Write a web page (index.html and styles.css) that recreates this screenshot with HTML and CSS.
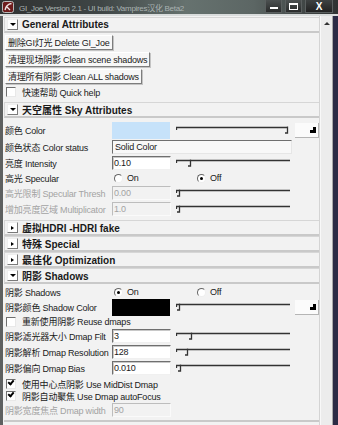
FILE: index.html
```html
<!DOCTYPE html>
<html lang="zh-CN">

<head>
    <meta charset="UTF-8">
    <title>GI_Joe Version 2.1</title>
    <link rel="stylesheet" href="styles.css">
</head>

<body>
    <div class="window">
        <div class="titlebar">
            <svg class="app-icon" width="12" height="12" viewBox="0 0 12 12">
                <rect x="0.5" y="0.5" width="11" height="11" rx="2" fill="#6e1c1c" stroke="#b9b9b9" />
                <path d="M3 9 C4 5 6 3 9.5 2.5 M4 5 L8 9" fill="none" stroke="#f0e6e6" stroke-width="1.3" />
            </svg>
            <span class="title">GI_Joe Version 2.1 - UI build: Vampires汉化 Beta2</span>
            <div class="caption">
                <span class="cap cap-min"><i></i></span>
                <span class="cap cap-max"><i></i></span>
                <span class="cap cap-close">X</span>
            </div>
        </div>

        <div class="client">
            <div class="panel">

                <!-- General -->
                <div class="frame">
                    <div class="frame-head"><span class="toggle open"></span>General Attributes</div>
                    <div class="frame-body general">
                        <button class="btn">删除GI灯光 Delete GI_Joe</button>
                        <button class="btn">清理现场阴影 Clean scene shadows</button>
                        <button class="btn">清理所有阴影 Clean ALL shadows</button>
                        <div class="check-row"><span class="checkbox"></span>快速帮助 Quick help</div>
                    </div>
                </div>

                <!-- Sky -->
                <div class="frame">
                    <div class="frame-head"><span class="toggle open"></span>天空属性 Sky Attributes</div>
                    <div class="frame-body sky">
                        <div class="row tall">
                            <span class="label">颜色 Color</span>
                            <span class="swatch sky"></span>
                            <svg class="slider" width="116" height="10" viewBox="0 0 116 10">
                                <path d="M0.5 5 V2.5 H111.5 M111.5 1.5 V8 H109" />
                            </svg>
                            <span class="map-btn"><span class="map-icon"></span></span>
                        </div>
                        <div class="row">
                            <span class="label">颜色状态 Color status</span>
                            <span class="dropdown">Solid Color</span>
                        </div>
                        <div class="row">
                            <span class="label">亮度 Intensity</span>
                            <span class="field">0.10</span>
                            <svg class="slider" width="116" height="10" viewBox="0 0 116 10">
                                <path d="M0.5 5 V2.5 H114 M14.5 1.5 V8 H12" />
                            </svg>
                        </div>
                        <div class="row radio-row">
                            <span class="label">高光 Specular</span>
                            <span class="radio"></span><span class="radio-text">On</span>
                            <span class="radio on second"></span><span class="radio-text">Off</span>
                        </div>
                        <div class="row dim">
                            <span class="label">高光限制 Specular Thresh</span>
                            <span class="field">0.00</span>
                            <svg class="slider" width="116" height="10" viewBox="0 0 116 10">
                                <path d="M0.5 5 V2.5 H114 M3.5 1.5 V8 H1" />
                            </svg>
                        </div>
                        <div class="row dim">
                            <span class="label">增加亮度区域 Multiplicator</span>
                            <span class="field">1.0</span>
                            <svg class="slider" width="116" height="10" viewBox="0 0 116 10">
                                <path d="M0.5 5 V2.5 H114 M3.5 1.5 V8 H1" />
                            </svg>
                        </div>
                    </div>
                </div>

                <div class="frame">
                    <div class="frame-head"><span class="toggle"></span>虚拟HDRI -HDRI fake</div>
                </div>
                <div class="frame">
                    <div class="frame-head"><span class="toggle"></span>特殊 Special</div>
                </div>
                <div class="frame">
                    <div class="frame-head"><span class="toggle"></span>最佳化 Optimization</div>
                </div>

                <!-- Shadows -->
                <div class="frame last">
                    <div class="frame-head"><span class="toggle open"></span>阴影 Shadows</div>
                    <div class="frame-body shadows">
                        <div class="row radio-row">
                            <span class="label">阴影 Shadows</span>
                            <span class="radio on"></span><span class="radio-text">On</span>
                            <span class="radio second"></span><span class="radio-text">Off</span>
                        </div>
                        <div class="row">
                            <span class="label">阴影颜色 Shadow Color</span>
                            <span class="swatch black"></span>
                            <svg class="slider" width="116" height="10" viewBox="0 0 116 10">
                                <path d="M0.5 5 V2.5 H114 M3.5 1.5 V8 H1" />
                            </svg>
                            <span class="map-btn"><span class="map-icon"></span></span>
                        </div>
                        <div class="check-row reuse"><span class="checkbox"></span>重新使用阴影 Reuse dmaps</div>
                        <div class="row">
                            <span class="label">阴影滤光器大小 Dmap Filt</span>
                            <span class="field">3</span>
                            <svg class="slider" width="116" height="10" viewBox="0 0 116 10">
                                <path d="M0.5 5 V2.5 H114 M15.5 1.5 V8 H13" />
                            </svg>
                        </div>
                        <div class="row">
                            <span class="label">阴影解析 Dmap Resolution</span>
                            <span class="field">128</span>
                            <svg class="slider" width="116" height="10" viewBox="0 0 116 10">
                                <path d="M0.5 5 V2.5 H114 M11.5 1.5 V8 H9" />
                            </svg>
                        </div>
                        <div class="row">
                            <span class="label">阴影偏向 Dmap Bias</span>
                            <span class="field">0.010</span>
                            <svg class="slider" width="116" height="10" viewBox="0 0 116 10">
                                <path d="M0.5 5 V2.5 H114 M4.5 1.5 V8 H2" />
                            </svg>
                        </div>
                        <div class="check-row middist"><span class="checkbox checked"></span>使用中心点阴影 Use MidDist Dmap</div>
                        <div class="check-row"><span class="checkbox checked"></span>阴影自动聚焦 Use Dmap autoFocus</div>
                        <div class="row dim">
                            <span class="label">阴影宽度焦点 Dmap width</span>
                            <span class="field">90</span>
                        </div>
                    </div>
                </div>

            </div>
            <div class="scrollbar"><span class="arrow-up"></span></div>
        </div>
    </div>
</body>

</html>
```

FILE: styles.css
```css
body {
    margin: 0;
    padding: 0;
    background-color: #2b2b3f;
    font-family: "Liberation Sans", "Noto Sans CJK SC", sans-serif;
    font-size: 9px;
    letter-spacing: -0.2px;
    color: #1a1a1a;
}

.window {
    width: 338px;
    height: 425px;
    overflow: hidden;
    display: flex;
    flex-direction: column;
}

/* title bar */
.titlebar {
    height: 14px;
    flex: none;
    display: flex;
    align-items: center;
    padding-left: 2px;
    background: linear-gradient(90deg, #2f3131 0%, #3f4646 30%, #66726f 55%, #5c6664 75%, #2f3232 100%);
    border-bottom: 2px solid #d9dcdc;
}

.app-icon {
    flex: none;
    margin-right: 5px;
}

.title {
    flex: 1;
    color: #aab3b2;
    white-space: nowrap;
    overflow: hidden;
    font-size: 8px;
    letter-spacing: -0.3px;
}

.caption {
    display: flex;
    align-self: stretch;
    gap: 3px;
    padding-right: 5px;
}

.cap {
    display: flex;
    align-items: center;
    justify-content: center;
    height: 12px;
    border: 1px solid #5a5f5f;
    border-top: none;
    background: linear-gradient(#4c5151, #2a2c2c);
}

.cap-min {
    width: 15px;
}

.cap-min i {
    display: block;
    width: 8px;
    height: 2px;
    margin-top: 4px;
    background-color: #fff;
}

.cap-max {
    width: 15px;
}

.cap-max i {
    display: block;
    width: 7px;
    height: 4px;
    border: 1px solid #fff;
    border-top-width: 2px;
}

.cap-close {
    width: 26px;
    color: #fff;
    font-weight: bold;
    font-size: 10px;
    letter-spacing: 0;
    background: linear-gradient(#3e4242, #222);
}

/* client area */
.client {
    flex: 1;
    display: flex;
    border-left: 3px solid #5e6060;
    border-right: 5px solid #2b2b45;
    background-color: #f2f2f2;
}

.panel {
    flex: 1;
    padding: 1px 0 0 1px;
    border-right: 1px solid #d4d4d4;
    overflow: hidden;
}

.scrollbar {
    width: 11px;
    flex: none;
    background-color: #ececec;
    border-left: 1px solid #f8f8f8;
    border-right: 1px solid #a8a8a8;
    display: flex;
    justify-content: center;
}

.arrow-up {
    margin-top: 6px;
    width: 0;
    height: 0;
    border-left: 3px solid transparent;
    border-right: 3px solid transparent;
    border-bottom: 3px solid #333;
}

/* collapsible frames */
.frame-head {
    height: 16px;
    box-sizing: border-box;
    display: flex;
    align-items: center;
    font-weight: bold;
    font-size: 10px;
    letter-spacing: 0;
    border-top: 1px solid #d6d6d6;
    border-bottom: 2px solid #c9c9c9;
    border-left: 1px solid #d6d6d6;
    white-space: nowrap;
}

.toggle {
    width: 9px;
    height: 9px;
    margin: 0 4px 0 2px;
    flex: none;
    background-color: #fff;
    border: 1px solid;
    border-color: #eee #7a7a7a #7a7a7a #eee;
    display: flex;
    align-items: center;
    justify-content: center;
}

.toggle::after {
    content: "";
    width: 0;
    height: 0;
    border-top: 2.5px solid transparent;
    border-bottom: 2.5px solid transparent;
    border-left: 3px solid #000;
}

.toggle.open::after {
    border-left: 3px solid transparent;
    border-right: 3px solid transparent;
    border-top: 3px solid #000;
    border-bottom: none;
}

.frame-body {
    padding: 3px 0 2px 1px;
}

.frame-body.general {
    padding-top: 2px;
    padding-bottom: 4px;
}

.frame-body.sky {
    padding-bottom: 3px;
}

.frame-body.shadows {
    padding-top: 1px;
}

.frame.last {
    border-bottom: 2px solid #c9c9c9;
}

/* buttons */
.btn {
    display: block;
    height: 15px;
    margin-bottom: 2px;
    padding: 0 2px;
    font-family: inherit;
    font-size: 9px;
    letter-spacing: inherit;
    color: #1a1a1a;
    background-color: #f7f7f7;
    border: 1px solid;
    border-color: #fff #7d7d7d #7d7d7d #fff;
    box-shadow: 1px 1px 0 #c4c4c4;
    white-space: nowrap;
}

/* checkbox rows */
.check-row {
    height: 12px;
    display: flex;
    align-items: center;
    white-space: nowrap;
}

.check-row.reuse {
    height: 13px;
}

.check-row.middist {
    margin-top: 2px;
}

.checkbox {
    width: 8px;
    height: 8px;
    margin-right: 6px;
    margin-left: 1px;
    flex: none;
    background-color: #fff;
    border: 1px solid;
    border-color: #6f6f6f #e8e8e8 #e8e8e8 #6f6f6f;
    position: relative;
}

.checkbox.checked::after {
    content: "";
    position: absolute;
    left: 1px;
    top: 0;
    width: 4px;
    height: 2px;
    border-left: 2px solid #000;
    border-bottom: 2px solid #000;
    transform: rotate(-50deg);
}

/* form rows */
.row {
    height: 16px;
    display: flex;
    align-items: center;
}

.row.tall {
    height: 18px;
}

.row.radio-row {
    height: 14px;
}

.label {
    width: 107px;
    flex: none;
    overflow: hidden;
    white-space: nowrap;
}

.dim {
    color: #a3a3a3;
}

.field {
    width: 56px;
    height: 12px;
    flex: none;
    line-height: 12px;
    padding-left: 1px;
    background-color: #fff;
    border: 1px solid;
    border-color: #6f6f6f #f0f0f0 #f0f0f0 #6f6f6f;
    box-shadow: inset 1px 1px 0 #c8c8c8;
}

.dim .field {
    background-color: #f2f2f2;
    border-color: #bdbdbd #fafafa #fafafa #bdbdbd;
    box-shadow: none;
}

.swatch {
    width: 58px;
    height: 17px;
    flex: none;
}

.swatch.sky {
    background-color: #c6e2fa;
}

.swatch.black {
    background-color: #000;
}

.dropdown {
    width: 176px;
    height: 12px;
    line-height: 12px;
    padding-left: 2px;
    background-color: #f8f8f8;
    border: 1px solid;
    border-color: #6f6f6f #e6e6e6 #e6e6e6 #6f6f6f;
}

.slider {
    flex: none;
    margin-left: 5px;
    fill: none;
    stroke: #333;
    stroke-width: 1.3;
}

.swatch + .slider {
    margin-left: 6px;
}

.map-btn {
    width: 23px;
    height: 14px;
    margin-left: 3px;
    flex: none;
    display: flex;
    align-items: center;
    justify-content: flex-end;
    background-color: #fbfbfb;
    border-right: 1px solid #b5b5b5;
    border-bottom: 1px solid #b5b5b5;
}

.map-icon {
    width: 6px;
    height: 6px;
    margin-right: 2px;
    background:
        linear-gradient(#000, #000) right top / 3px 3px no-repeat,
        linear-gradient(#000, #000) left bottom / 3px 3px no-repeat,
        linear-gradient(#000, #000) right bottom / 3px 3px no-repeat;
}

/* radio buttons */
.radio {
    width: 7px;
    height: 7px;
    margin-left: 2px;
    flex: none;
    border-radius: 50%;
    background-color: #fff;
    border: 1px solid;
    border-color: #666 #eee #eee #666;
    display: flex;
    align-items: center;
    justify-content: center;
}

.radio.on::after {
    content: "";
    width: 3px;
    height: 3px;
    border-radius: 50%;
    background-color: #000;
}

.radio.second {
    margin-left: 58px;
}

.radio-text {
    margin-left: 4px;
    width: 12px;
}
```
